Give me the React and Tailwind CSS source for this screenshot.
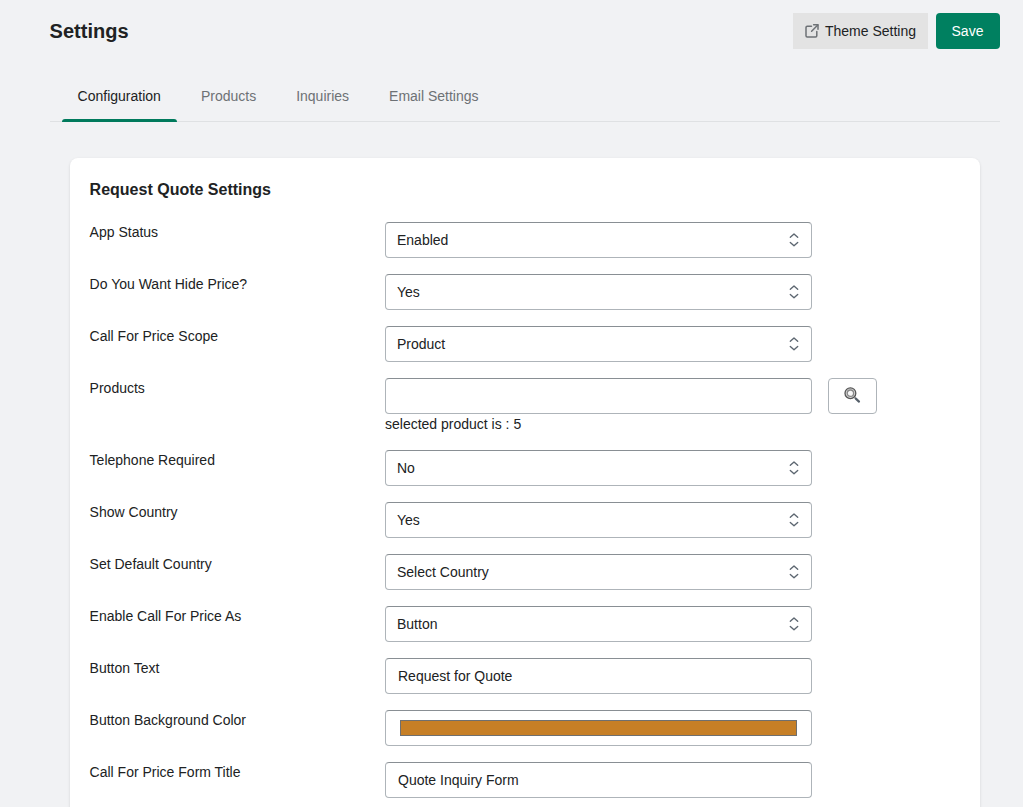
import React from "react";

const Chevrons = () => (
  <svg width="12" height="18" viewBox="0 0 12 18" fill="none" stroke="#5c6670" strokeWidth="1.35" strokeLinecap="round" strokeLinejoin="round">
    <path d="M2.3 6.3 6 3l3.7 3.3" />
    <path d="M2.3 11.5 6 14.8l3.7-3.3" />
  </svg>
);

const ExternalIcon = () => (
  <svg width="16" height="16" viewBox="0 0 16 16" fill="none" stroke="#6d7175" strokeWidth="1.5" strokeLinecap="round" strokeLinejoin="round">
    <path d="M6.5 3.2H2.2C1.5 3.2 1 3.7 1 4.4v8.4c0 .7.5 1.2 1.2 1.2h8.4c.7 0 1.2-.5 1.2-1.2V8.6" />
    <path d="M8.6 1.8h4.4v4.4" />
    <path d="M12.8 2 6.6 8.2" />
  </svg>
);

const SearchGlyph = () => (
  <svg width="17" height="17" viewBox="0 0 17 17" fill="none">
    <circle cx="6.4" cy="6.2" r="5.4" stroke="#555" strokeWidth="1.3" fill="#d9d9d9" />
    <circle cx="6.4" cy="6.2" r="3.2" stroke="#888" strokeWidth="1.3" fill="#f7f7f7" />
    <path d="M10.5 10.3l1.2 1.2" stroke="#888" strokeWidth="1.5" />
    <path d="M11.8 11.6l3.2 3" stroke="#56606a" strokeWidth="2.2" strokeLinecap="round" />
  </svg>
);

const field = "h-9 w-[427px] bg-white border border-[#aeb4b9] border-t-[#898f94] rounded-[4px] flex items-center";

const Select = ({ value }) => (
  <div className={`${field} justify-between pl-[11px] pr-[11px] text-[14px] text-[#202223]`}>
    <span>{value}</span>
    <Chevrons />
  </div>
);

const Input = ({ value }) => (
  <div className={`${field} pl-3 text-[14px] text-[#202223]`}>{value}</div>
);

const Row = ({ label, children }) => (
  <div className="flex items-start">
    <div className="w-[295px] h-5 leading-5 text-[14px] text-[#202223]">
      <span className="block -ml-[0.4px]">{label}</span>
    </div>
    <div>{children}</div>
  </div>
);

export default function App() {
  return (
    <div
      className="h-[807px] overflow-hidden bg-[#f1f2f4] pl-[50px] pr-[23px]"
      style={{ fontFamily: '"Liberation Sans", Arial, sans-serif' }}
    >
      <header className="flex items-center justify-between pt-[13px]">
        <h1 className="text-[20px] leading-9 font-semibold text-[#202223] -ml-[0.4px]">Settings</h1>
        <div className="flex gap-2">
          <button className="h-9 w-[135px] bg-[#e3e3e3] flex items-center justify-center gap-1 text-[14px] text-[#202223]">
            <ExternalIcon />
            <span>Theme Setting</span>
          </button>
          <button className="h-9 w-16 bg-[#008060] rounded-[4px] text-[14px] text-white pr-[1px]">Save</button>
        </div>
      </header>

      <nav className="mt-[23px] h-[50px] border-b border-[#dfe1e3] flex gap-2 pl-3 text-[14px]">
        <div className="relative h-[49px] px-4 leading-[48px] text-[#202223]">
          <span className="block -ml-[0.4px]">Configuration</span>
          <div className="absolute left-0 right-0 bottom-[-1px] h-[3px] rounded-t-[3px] bg-[#007a5c]" />
        </div>
        <div className="px-4 leading-[48px] text-[#6d7175]">Products</div>
        <div className="px-4 leading-[48px] text-[#6d7175]">Inquiries</div>
        <div className="px-4 leading-[48px] text-[#6d7175]">Email Settings</div>
      </nav>

      <main className="ml-5 mr-5 mt-9 bg-white rounded-[8px] shadow-[0_1px_3px_rgba(0,0,0,0.12)] px-5 pt-5 pb-6">
        <h2 className="text-[16px] leading-[24px] font-bold text-[#202223] mb-[20px] -ml-[0.4px]">Request Quote Settings</h2>
        <div className="flex flex-col gap-4">
          <Row label="App Status"><Select value="Enabled" /></Row>
          <Row label="Do You Want Hide Price?"><Select value="Yes" /></Row>
          <Row label="Call For Price Scope"><Select value="Product" /></Row>
          <Row label="Products">
            <div className="flex gap-4">
              <div className={field} />
              <button className="h-9 w-[49px] bg-white border border-[#aeb4b9] rounded-[4px] flex items-center justify-center pb-[2px]">
                <SearchGlyph />
              </button>
            </div>
            <div className="h-5 leading-5 text-[14px] text-[#202223]">selected product is : 5</div>
          </Row>
          <Row label="Telephone Required"><Select value="No" /></Row>
          <Row label="Show Country"><Select value="Yes" /></Row>
          <Row label="Set Default Country"><Select value="Select Country" /></Row>
          <Row label="Enable Call For Price As"><Select value="Button" /></Row>
          <Row label="Button Text"><Input value="Request for Quote" /></Row>
          <Row label="Button Background Color">
            <div className={`${field} px-[14px]`}>
              <div className="h-4 w-full bg-[#c67f26] border border-[#6f6f6f]" />
            </div>
          </Row>
          <Row label="Call For Price Form Title"><Input value="Quote Inquiry Form" /></Row>
        </div>
      </main>
    </div>
  );
}
